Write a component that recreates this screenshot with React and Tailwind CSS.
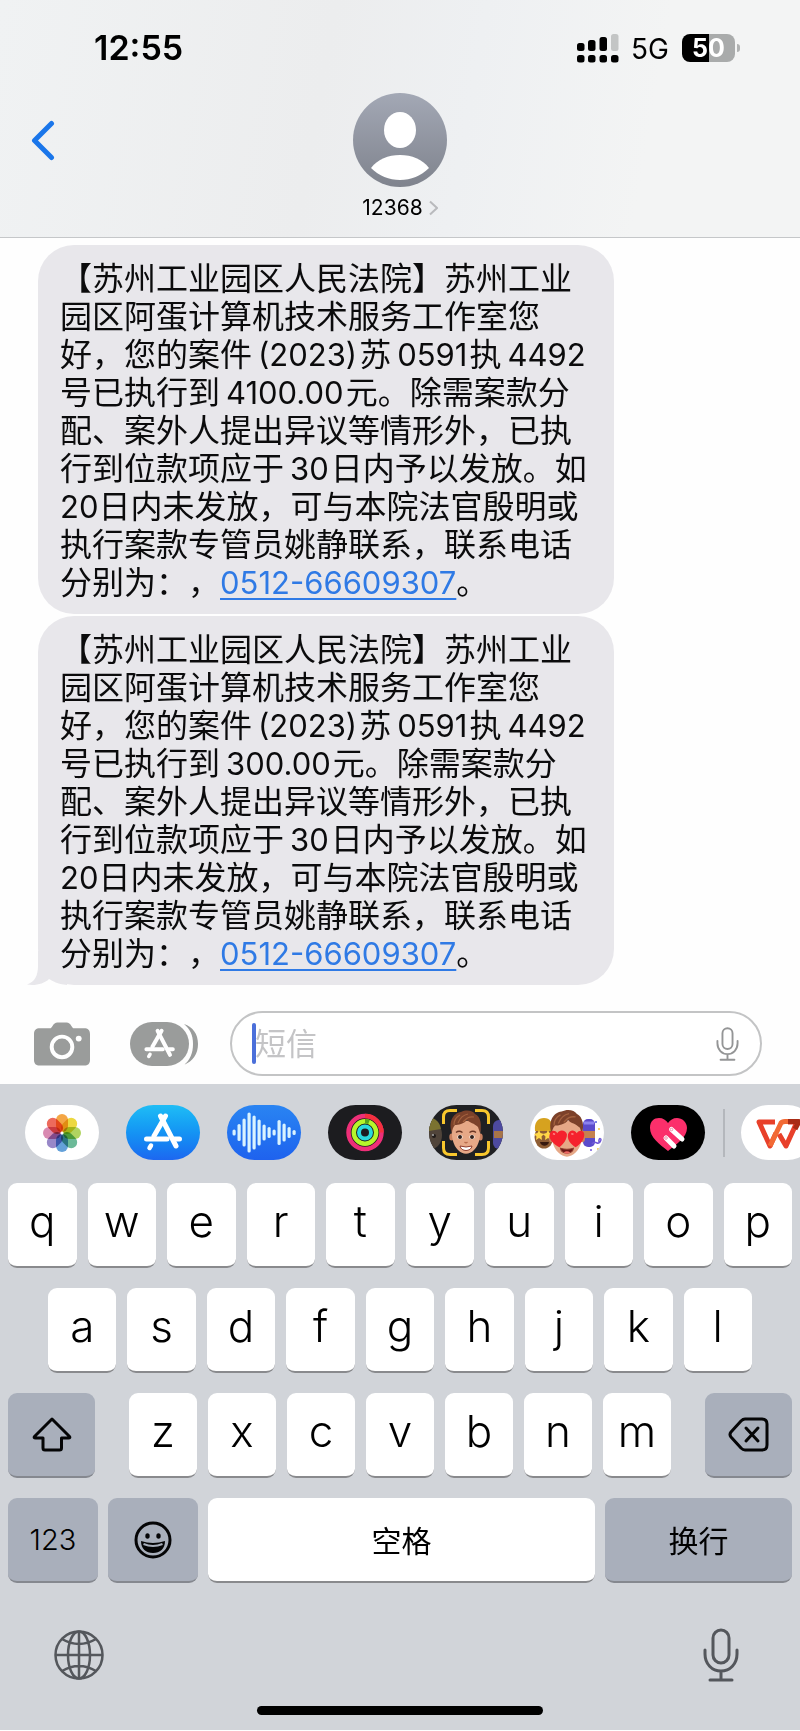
import React from 'react';

const messages = [
	[
		'【苏州工业园区人民法院】苏州工业',
		'园区阿蛋计算机技术服务工作室您',
		'好，您的案件(2023)苏0591执4492',
		'号已执行到4100.00元。除需案款分',
		'配、案外人提出异议等情形外，已执',
		'行到位款项应于30日内予以发放。如',
		'20日内未发放，可与本院法官殷明或',
		'执行案款专管员姚静联系，联系电话',
		'分别为：，0512-66609307。',
	],
	[
		'【苏州工业园区人民法院】苏州工业',
		'园区阿蛋计算机技术服务工作室您',
		'好，您的案件(2023)苏0591执4492',
		'号已执行到300.00元。除需案款分',
		'配、案外人提出异议等情形外，已执',
		'行到位款项应于30日内予以发放。如',
		'20日内未发放，可与本院法官殷明或',
		'执行案款专管员姚静联系，联系电话',
		'分别为：，0512-66609307。',
	],
];

const fontStack = "font-[Inter,'Noto_Sans_CJK_SC',sans-serif]";

function MessageLine({ text }) {
	const parts = text.split(/([0-9().-]+)/).filter(Boolean);
	return (
		<span className="block whitespace-nowrap">
			{parts.map((part, i) => {
				if (/^\d{4}-\d+$/.test(part)) {
					return (
						<a
							key={part}
							href={`tel:${part}`}
							className="text-[31px] text-[#2f7ae5] underline decoration-2 underline-offset-4"
						>
							{part}
						</a>
					);
				}
				if (/^[0-9(]/.test(part)) {
					return (
						<span key={part} className={i === 0 ? 'text-[31px]' : 'mr-[2px] ml-[6px] text-[31px]'}>
							{part}
						</span>
					);
				}
				return part;
			})}
		</span>
	);
}

function Bubble({ lines, tail }) {
	return (
		<div className="relative w-fit rounded-[36px] bg-[#e8e7eb] pt-[15px] pr-[26px] pb-3 pl-[22px] text-[32px] leading-[38px] text-[#0b0b0c] [text-spacing-trim:space-all]">
			{tail && (
				<svg
					className="absolute bottom-0 -left-[11px]"
					width="40"
					height="34"
					viewBox="0 0 40 34"
					fill="#e8e7eb"
					aria-hidden="true"
				>
					<path d="M11 0V15C11 24 8 31 0 33.5C8 35 17 33 22 28C26 30 30 33 40 34V0Z" />
				</svg>
			)}
			<p className="relative">
				{lines.map((line) => (
					<MessageLine key={line} text={line} />
				))}
			</p>
		</div>
	);
}

function StatusBar() {
	return (
		<div className="flex h-[66px] items-end justify-between pr-[60px] pl-[94px]">
			<time className="text-[34px] leading-9 font-semibold">12:55</time>
			<div className="flex h-9 items-center">
				<svg className="mr-3" width="42" height="29" viewBox="0 0 42 29" aria-label="信号" role="img">
					<rect x="0" y="9" width="7.5" height="8" rx="2.5" />
					<rect x="11" y="6" width="7.5" height="11" rx="2.5" />
					<rect x="22.5" y="3" width="7.5" height="14" rx="2.5" />
					<rect x="34" y="0" width="7.5" height="17" rx="2.5" fill="#c3c5c5" />
					<rect x="0" y="21" width="7.5" height="7.5" rx="2.5" />
					<rect x="11" y="21" width="7.5" height="7.5" rx="2.5" />
					<rect x="22.5" y="21" width="7.5" height="7.5" rx="2.5" />
					<rect x="34" y="21" width="7.5" height="7.5" rx="2.5" />
				</svg>
				<span className="mt-[2px] mr-[13px] text-[28px] leading-8">5G</span>
				<div className="flex h-7 w-[53px] items-center justify-center rounded-lg bg-[linear-gradient(90deg,#000_51%,#a9abab_51%)] text-[25px] leading-7 font-bold text-white">
					50
				</div>
				<span className="ml-[2px] h-2 w-[3px] rounded-r-full bg-[#b0b2b2]" />
			</div>
		</div>
	);
}

function Header() {
	return (
		<header className="border-b border-[#c5c7c9] bg-[linear-gradient(100deg,#f0f2f3_0%,#ecedee_40%,#eef0f2_58%,#f3f4f4_80%)]">
			<StatusBar />
			<div className="grid h-[171px] grid-cols-[1fr_auto_1fr] items-start pt-[27px]">
				<button type="button" aria-label="返回" className="mt-[27px] ml-[30px] w-fit">
					<svg width="26" height="41" viewBox="0 0 26 41" fill="none" stroke="#1a76ea" strokeWidth="5" strokeLinecap="round" strokeLinejoin="round">
						<path d="M21.5 3.5L4.5 20.5L21.5 37.5" />
					</svg>
				</button>
				<button type="button" className="flex flex-col items-center">
					<svg width="94" height="94" viewBox="0 0 94 94" aria-hidden="true">
						<defs>
							<linearGradient id="avatar" x1="0" y1="0" x2="0" y2="1">
								<stop offset="0" stopColor="#a3a8b5" />
								<stop offset="1" stopColor="#7f838d" />
							</linearGradient>
						</defs>
						<circle cx="47" cy="47" r="47" fill="url(#avatar)" />
						<ellipse cx="47" cy="37" rx="16" ry="18" fill="#fff" />
						<path d="M18 75C25 66 35 62 47 62C59 62 69 66 76 75C68 83 58 87 47 87C36 87 26 83 18 75Z" fill="#fff" />
					</svg>
					<span className="mt-[9px] flex items-center gap-[6px] text-[21px] leading-6">
						12368
						<svg width="9" height="16" viewBox="0 0 9 16" fill="none" stroke="#b9babd" strokeWidth="2">
							<path d="M1 1.5L8 8L1 14.5" />
						</svg>
					</span>
				</button>
			</div>
		</header>
	);
}

function MicIcon({ className }) {
	return (
		<svg className={className} viewBox="0 0 36 54" fill="none" stroke="currentColor" strokeWidth="3" strokeLinecap="round" aria-hidden="true">
			<rect x="10" y="2" width="16" height="33" rx="8" />
			<path d="M2 22V26C2 36 9 43 18 43S34 36 34 26V22M18 43V52M7 52H29" />
		</svg>
	);
}

function StoreGlyph() {
	return (
		<g fill="none" strokeLinecap="round">
			<path d="M34.5 11L50 41" strokeWidth="5" />
			<path d="M39.5 11L28 31" strokeWidth="5" />
			<path d="M20.5 34H41M48.5 34H53.5" strokeWidth="5" />
			<path d="M25 40.5L23.5 43" strokeWidth="4.5" />
		</g>
	);
}

function Composer() {
	return (
		<form className="flex items-center pr-[38px] pb-2 pl-[34px]" onSubmit={(e) => e.preventDefault()}>
			<button type="button" aria-label="相机" className="mr-10">
				<svg width="56" height="44" viewBox="0 0 57 44">
					<path
						d="M6 6H16C19 6 19 0 24 0H33C38 0 38 6 41 6H51C55 6 57 8 57 12V38C57 42 55 44 51 44H6C2 44 0 42 0 38V12C0 8 2 6 6 6Z"
						fill="#9a9c9b"
					/>
					<circle cx="28.5" cy="25" r="10.5" fill="none" stroke="#fff" strokeWidth="4" />
					<circle cx="45.5" cy="16.5" r="3" fill="#fff" />
				</svg>
			</button>
			<button type="button" aria-label="应用" className="mr-8">
				<svg width="68" height="44" viewBox="0 0 68 44">
					<path d="M54 2C63 5 68 12 68 22S63 39 54 43C60 38 63 31 63 22S60 7 54 2Z" fill="#9a9c9b" />
					<rect width="59" height="44" rx="22" fill="#9a9c9b" />
					<g transform="translate(0 0) scale(0.8)" stroke="#fff">
						<StoreGlyph />
					</g>
				</svg>
			</button>
			<div className="relative flex h-[65px] min-w-0 flex-1 items-center rounded-full border-2 border-[#c3c4c5] bg-white">
				<span className="absolute left-5 h-[41px] w-1 rounded-full bg-[#4b6fda]" />
				<input
					type="text"
					aria-label="短信"
					placeholder="短信"
					className="min-w-0 flex-1 bg-transparent pl-[23px] text-[31px] leading-10 outline-none placeholder:text-[#c4c4c6]"
				/>
				<button type="button" aria-label="听写" className="mr-[21px]">
					<MicIcon className="h-[34px] w-[23px] text-[#949596]" />
				</button>
			</div>
		</form>
	);
}

const petals = ['#f39a2b', '#e9d326', '#a5ce4a', '#58b08a', '#4f94d4', '#8a78c0', '#d47aa6', '#ea5545'];

function PhotosIcon() {
	return (
		<g>
			{petals.map((color, i) => (
				<rect
					key={color}
					x="31"
					y="9"
					width="12"
					height="18"
					rx="6"
					fill={color}
					fillOpacity="0.88"
					className="mix-blend-multiply"
					transform={`rotate(${i * 45} 37 28)`}
				/>
			))}
			<circle cx="37" cy="28" r="1.5" fill="#fff" />
		</g>
	);
}

const wave = [6, 17, 28, 40, 34, 26, 16, 11, 6, 25, 18, 11, 5];

function WaveIcon() {
	return (
		<g fill="#d9f3ff">
			{wave.map((h, i) => (
				<rect key={i} x={5.5 + i * 5} y={27.5 - h / 2} width="3.2" height={h} rx="1.6" />
			))}
		</g>
	);
}

function RingsIcon() {
	return (
		<g fill="none" strokeWidth="4.5">
			<circle cx="37" cy="27.5" r="16.5" stroke="#ee2f78" />
			<path d="M37 11A16.5 16.5 0 0 1 53.5 27.5" stroke="#f5303f" />
			<circle cx="37" cy="27.5" r="11.2" stroke="#b6f52b" />
			<path d="M37 16.3A11.2 11.2 0 0 1 41 17" stroke="#57a51c" />
			<circle cx="37" cy="27.5" r="6" stroke="#2ad9dc" strokeWidth="4" />
		</g>
	);
}

function Face({ hearts }) {
	return (
		<g>
			<ellipse cx="22.5" cy="32" rx="2.2" ry="3.5" fill="#c9805f" />
			<ellipse cx="51.5" cy="32" rx="2.2" ry="3.5" fill="#c9805f" />
			<path d="M23 21C23 14 51 14 51 21C52 32 50 40 45 45C40 50 34 50 29 45C24 40 22 32 23 21Z" fill="#e6a887" />
			<path d="M23 28C19 17 24 8 32 7C38 4 44 6 46 9C52 12 53 20 51 28L49 22C45 18 41 18 38 15C35 19 29 20 26 20C24 22 23 25 23 28Z" fill="#7c412a" />
			<path d="M29 18C31 13 34 10 39 9M34 17C37 14 39 11 45 12M25 20C25 15 27 12 31 10" stroke="#a4623f" strokeWidth="1.2" fill="none" />
			{hearts ? (
				<g fill="#f5222d">
					<path d="M30 40C24 37 20 32 21 28C22 24 26 24 28 27C30 23 36 24 37 28C37 33 34 37 30 40Z" />
					<path d="M45 40C40 37 37 33 38 28C39 24 44 23 46 27C49 23 53 25 53 28C53 33 50 37 45 40Z" />
					<path d="M24 27.5L26 28M41 27.5L43 28" stroke="#ff8585" strokeWidth="1.5" />
				</g>
			) : (
				<g>
					<path d="M27 27.5Q30 25 33.5 27.5M40.5 27.5Q44 25 47 27.5" stroke="#6b3625" strokeWidth="1.3" fill="none" />
					<ellipse cx="31" cy="32" rx="2.6" ry="2.2" fill="#fff" />
					<ellipse cx="43" cy="32" rx="2.6" ry="2.2" fill="#fff" />
					<circle cx="31" cy="32" r="2" fill="#33201a" />
					<circle cx="43" cy="32" r="2" fill="#33201a" />
					<path d="M35.5 37Q37 38.5 38.5 37" stroke="#b86c4d" strokeWidth="1.3" fill="none" />
				</g>
			)}
			<path d="M31 41Q37 43 43 41C42 47 32 47 31 41Z" fill={hearts ? '#6b1717' : '#fff'} stroke="#8f3e2f" strokeWidth="1" />
			{hearts && <path d="M34 45Q37 42.5 40 45Q37 47 34 45Z" fill="#ef6a66" />}
		</g>
	);
}

function MemojiIcon() {
	return (
		<g>
			<ellipse cx="2" cy="30" rx="11" ry="14" fill="#50443a" />
			<path d="M0 12C7 13 11 18 12 24L0 26Z" fill="#7b7230" />
			<circle cx="5" cy="31" r="2" fill="#201b18" />
			<circle cx="4" cy="30" r="1" fill="#aaa" />
			<rect x="64" y="15" width="14" height="29" rx="6" fill="#4d4a9f" />
			<path d="M65 26H74V33H65Z" fill="#a87548" />
			<Face />
			<path
				d="M14.5 19V12Q14.5 5.5 21 5.5H28M46 5.5H53Q59.500 5.5 59.5 12V19M59.5 36V43Q59.5 49.5 53 49.5H46M28 49.5H21Q14.5 49.5 14.5 43V36"
				stroke="#f8c72d"
				strokeWidth="3"
				fill="none"
			/>
		</g>
	);
}

function StickersIcon() {
	return (
		<g>
			<ellipse cx="14" cy="32" rx="9.5" ry="11.5" fill="#8e5d34" />
			<path d="M5 26C4 17 8 13 14 13S23 17 22 26Z" fill="#d6a21f" />
			<path d="M9 25L10.5 28L14 29L11.5 31.500L12 35L9 33L6 35L6.5 31.5L4 29L7.500 28ZM18 25L19.5 28L23 29L20.5 31.5L21 35L18 33L15 35L15.5 31.5L13 29L16.500 28Z" fill="#ffd747" />
			<path d="M10 37H19C18 42 11 42 10 37Z" fill="#37190f" />
			<rect x="53" y="14" width="12" height="28" rx="5" fill="#5b4bcb" />
			<path d="M53 26H65V33H53Z" fill="#c5814f" />
			<path d="M54 18H64" stroke="#8c83ef" strokeWidth="3" />
			<path d="M62 39C66 34 67 41 70 37C73 33 68 32 69 37" fill="none" stroke="#7059d8" strokeWidth="1.5" />
			<circle cx="66" cy="17" r="1" fill="#4f5be0" />
			<circle cx="69" cy="24" r="1" fill="#f2c83a" />
			<circle cx="61" cy="45" r="1" fill="#7059d8" />
			<circle cx="68" cy="44" r="1" fill="#f2c83a" />
			<g transform="translate(-3 -1) scale(1.08)">
				<Face hearts />
			</g>
		</g>
	);
}

function TouchIcon() {
	return (
		<g>
			<path d="M37 46C28 39 19 32 19 23C19 16 23 13 28 13C32 13 35 15 37 18C39 15 42 13 46 13C51 13 56 17 56 23C56 32 46 39 37 46Z" fill="#fb2f6b" />
			<path d="M40.5 24.5L51 34M35 33L43 41" stroke="#fff" strokeWidth="5" strokeLinecap="round" />
			<circle cx="40.5" cy="24.5" r="1.3" fill="#fff" stroke="#e894ab" />
			<circle cx="35" cy="33" r="1.3" fill="#fff" stroke="#e894ab" />
		</g>
	);
}

function OfficeIcon() {
	return (
		<g fill="none" strokeWidth="5" strokeLinejoin="round">
			<path d="M34 17H18L29 41L35 28" stroke="#e8402a" />
			<path d="M38 29L45 41L56 17H47" stroke="#e8402a" />
			<path d="M29 41L40 18Q41 16.5 44 16.5H48" stroke="#f26a35" />
			<path d="M47 16.5H58L54 24" stroke="#a92c16" />
		</g>
	);
}

const apps = [
	{ name: '照片', bg: 'bg-white', icon: <PhotosIcon /> },
	{ name: 'App Store', bg: 'bg-linear-to-b from-[#20bdf5] to-[#1d67f0]', icon: <g stroke="#fff"><StoreGlyph /></g> },
	{ name: '音乐识别', bg: 'bg-linear-to-b from-[#2a84f2] to-[#1f62ee]', icon: <WaveIcon /> },
	{ name: '健身', bg: 'bg-[#1c1c1f]', icon: <RingsIcon /> },
	{ name: '拟我表情', bg: 'bg-[#1f2023]', icon: <MemojiIcon /> },
	{ name: '表情贴纸', bg: 'bg-white', icon: <StickersIcon /> },
	{ name: 'Digital Touch', bg: 'bg-black', icon: <TouchIcon /> },
];

function AppPill({ name, bg, icon }) {
	return (
		<button type="button" aria-label={name} className={`h-[55px] w-[74px] shrink-0 overflow-hidden rounded-full ${bg}`}>
			<svg width="74" height="55" viewBox="0 0 74 55">
				{icon}
			</svg>
		</button>
	);
}

function AppStrip() {
	return (
		<div className="flex items-center overflow-hidden pt-[21px] pl-[25px]">
			<div className="flex shrink-0 gap-[27px]">
				{apps.map((app) => (
					<AppPill key={app.name} {...app} />
				))}
			</div>
			<span className="mr-4 ml-[18px] h-12 w-[2px] shrink-0 bg-[#b4b7bc]" />
			<AppPill name="WPS" bg="bg-white" icon={<OfficeIcon />} />
		</div>
	);
}

const keyBase = 'flex h-[85px] items-center justify-center rounded-[9px] border-b-2';
const letterKey = `${keyBase} min-w-0 flex-1 border-[#898a8d] bg-white pb-2 text-[44px] leading-none font-[350]`;
const darkKey = `${keyBase} border-[#85888f] bg-[#a9afbb]`;

function Letters({ row }) {
	return row.split('').map((letter) => (
		<button key={letter} type="button" className={letterKey}>
			{letter}
		</button>
	));
}

function Keyboard() {
	return (
		<section className="bg-[#d1d4d9]" aria-label="键盘">
			<AppStrip />
			<div className="flex flex-col gap-5 px-2 pt-[23px]">
				<div className="flex gap-[11px]">
					<Letters row="qwertyuiop" />
				</div>
				<div className="flex gap-[11px] px-10">
					<Letters row="asdfghjkl" />
				</div>
				<div className="flex">
					<button type="button" aria-label="大写" className={`${darkKey} w-[87px]`}>
						<svg width="40" height="35" viewBox="0 0 40 35" fill="none" stroke="#050506" strokeWidth="3" strokeLinejoin="round">
							<path d="M20 2L37.5 19.5Q38.5 21 36.5 21H29.5V31Q29.5 33 27.5 33H13Q11 33 11 31V21H3.5Q1.5 21 2.5 19.5Z" />
						</svg>
					</button>
					<div className="flex flex-1 gap-[11px] px-[34px]">
						<Letters row="zxcvbnm" />
					</div>
					<button type="button" aria-label="删除" className={`${darkKey} w-[87px]`}>
						<svg width="41" height="35" viewBox="0 0 41 35" fill="none" stroke="#050506" strokeWidth="3" strokeLinecap="round" strokeLinejoin="round">
							<path d="M17 2H34Q39 2 39 7V28Q39 33 34 33H17Q15 33 13 31L3 20Q1 17.5 3 15L13 4Q15 2 17 2Z" />
							<path d="M18 11L30 24M30 11L18 24" />
						</svg>
					</button>
				</div>
				<div className="flex gap-[10px]">
					<button type="button" className={`${darkKey} w-[90px] text-[29px] font-[350]`}>
						123
					</button>
					<button type="button" aria-label="表情" className={`${darkKey} w-[90px]`}>
						<svg width="38" height="38" viewBox="0 0 38 38" fill="none" stroke="#050506" strokeWidth="3">
							<circle cx="19" cy="19" r="17" />
							<ellipse cx="13.5" cy="15" rx="2.2" ry="2.7" fill="#050506" stroke="none" />
							<ellipse cx="24.5" cy="15" rx="2.2" ry="2.7" fill="#050506" stroke="none" />
							<path d="M7 20Q19 24 31 20C31 28 26 32 19 32S7 28 7 20Z" fill="#050506" stroke="none" />
							<path d="M9.5 23Q19 27 28.5 23" stroke="#a9afbb" strokeWidth="2" />
						</svg>
					</button>
					<button
						type="button"
						aria-label="空格"
						className={`${keyBase} min-w-0 flex-1 border-[#898a8d] bg-white pt-1 text-[30px]`}
					>
						空格
					</button>
					<button type="button" className={`${darkKey} w-[187px] pt-1 text-[30px]`}>
						换行
					</button>
				</div>
			</div>
			<div className="flex items-center justify-between px-[54px] pt-[45px]">
				<button type="button" aria-label="切换语言">
					<svg width="50" height="50" viewBox="0 0 50 50" fill="none" stroke="#54575c" strokeWidth="2.5">
						<circle cx="25" cy="25" r="23.5" />
						<ellipse cx="25" cy="25" rx="11" ry="23.5" />
						<path d="M25 1.5V48.5M1.5 25H48.5M8 9Q25 19 42 9M8 41Q25 31 42 41" />
					</svg>
				</button>
				<button type="button" aria-label="语音输入" className="mr-[7px]">
					<MicIcon className="h-[54px] w-9 text-[#54575c]" />
				</button>
			</div>
			<div className="pt-6 pb-[15px]">
				<div className="mx-auto h-[9px] w-[286px] rounded-full bg-black" />
			</div>
		</section>
	);
}

function App() {
	return (
		<div className={`${fontStack} flex w-full flex-col bg-[#fefefe] text-black`} lang="zh-CN">
			<Header />
			<main className="flex flex-col gap-[2px] pt-[7px] pb-[26px] pl-[38px]">
				{messages.map((lines, i) => (
					<Bubble key={lines[3]} lines={lines} tail={i === messages.length - 1} />
				))}
			</main>
			<Composer />
			<Keyboard />
		</div>
	);
}

export default App;
